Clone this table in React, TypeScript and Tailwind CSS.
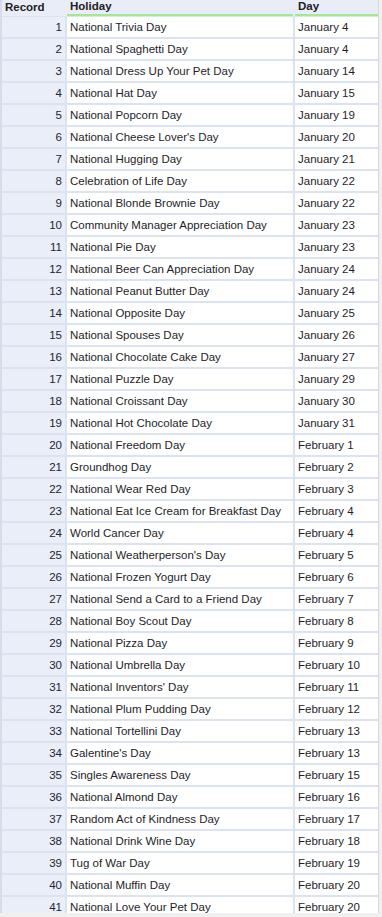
const rows: [string, string][] = [
  ["National Trivia Day", "January 4"],
  ["National Spaghetti Day", "January 4"],
  ["National Dress Up Your Pet Day", "January 14"],
  ["National Hat Day", "January 15"],
  ["National Popcorn Day", "January 19"],
  ["National Cheese Lover's Day", "January 20"],
  ["National Hugging Day", "January 21"],
  ["Celebration of Life Day", "January 22"],
  ["National Blonde Brownie Day", "January 22"],
  ["Community Manager Appreciation Day", "January 23"],
  ["National Pie Day", "January 23"],
  ["National Beer Can Appreciation Day", "January 24"],
  ["National Peanut Butter Day", "January 24"],
  ["National Opposite Day", "January 25"],
  ["National Spouses Day", "January 26"],
  ["National Chocolate Cake Day", "January 27"],
  ["National Puzzle Day", "January 29"],
  ["National Croissant Day", "January 30"],
  ["National Hot Chocolate Day", "January 31"],
  ["National Freedom Day", "February 1"],
  ["Groundhog Day", "February 2"],
  ["National Wear Red Day", "February 3"],
  ["National Eat Ice Cream for Breakfast Day", "February 4"],
  ["World Cancer Day", "February 4"],
  ["National Weatherperson's Day", "February 5"],
  ["National Frozen Yogurt Day", "February 6"],
  ["National Send a Card to a Friend Day", "February 7"],
  ["National Boy Scout Day", "February 8"],
  ["National Pizza Day", "February 9"],
  ["National Umbrella Day", "February 10"],
  ["National Inventors' Day", "February 11"],
  ["National Plum Pudding Day", "February 12"],
  ["National Tortellini Day", "February 13"],
  ["Galentine's Day", "February 13"],
  ["Singles Awareness Day", "February 15"],
  ["National Almond Day", "February 16"],
  ["Random Act of Kindness Day", "February 17"],
  ["National Drink Wine Day", "February 18"],
  ["Tug of War Day", "February 19"],
  ["National Muffin Day", "February 20"],
  ["National Love Your Pet Day", "February 20"],
];

export default function App() {
  return (
    <div className="w-[382px] h-[917px] overflow-hidden bg-[#f0f0f0] flex flex-col font-['Liberation_Sans',Arial,sans-serif] text-[11.5px] text-[#1e1e2a]">
      <div className="flex-1 overflow-hidden flex">
        <div className="w-[378px] bg-[#dce3f0] flex flex-col border-l-2 border-[#d5dceb]">
          <div className="flex h-[16px] shrink-0 font-bold text-[#222]">
            <div className="w-[63px] bg-[#e8edf7] pl-[3px] leading-[14px]">Record</div>
            <div className="w-[2px] bg-[#e8edf7]" />
            <div className="w-[226px] bg-[#e8edf7] pl-[3px] leading-[13px] border-b-2 border-[#a6e98a]">Holiday</div>
            <div className="w-[2px] bg-[#e8edf7]" />
            <div className="flex-1 bg-[#e8edf7] pl-[3px] leading-[13px] border-b-2 border-[#a6e98a]">Day</div>
          </div>
          <div className="flex flex-col gap-[2px] pt-[1px]">
            {rows.map(([name, day], i) => (
              <div key={i} className="flex h-[20px] shrink-0 gap-[2px]">
                <div className="w-[63px] bg-[#e9eef8] text-right pr-[3px] leading-[20px] text-[#1c2436]">{i + 1}</div>
                <div className="w-[226px] bg-white pl-[3px] leading-[20px] whitespace-nowrap overflow-hidden">{name}</div>
                <div className="flex-1 bg-white pl-[3px] leading-[20px] whitespace-nowrap overflow-hidden">{day}</div>
              </div>
            ))}
          </div>
        </div>
        <div className="w-[4px] bg-[#f0f0f0] border-l border-[#d9d9d9]" />
      </div>
      <div className="h-[4px] shrink-0 bg-[#f0f0f0]" />
    </div>
  );
}
